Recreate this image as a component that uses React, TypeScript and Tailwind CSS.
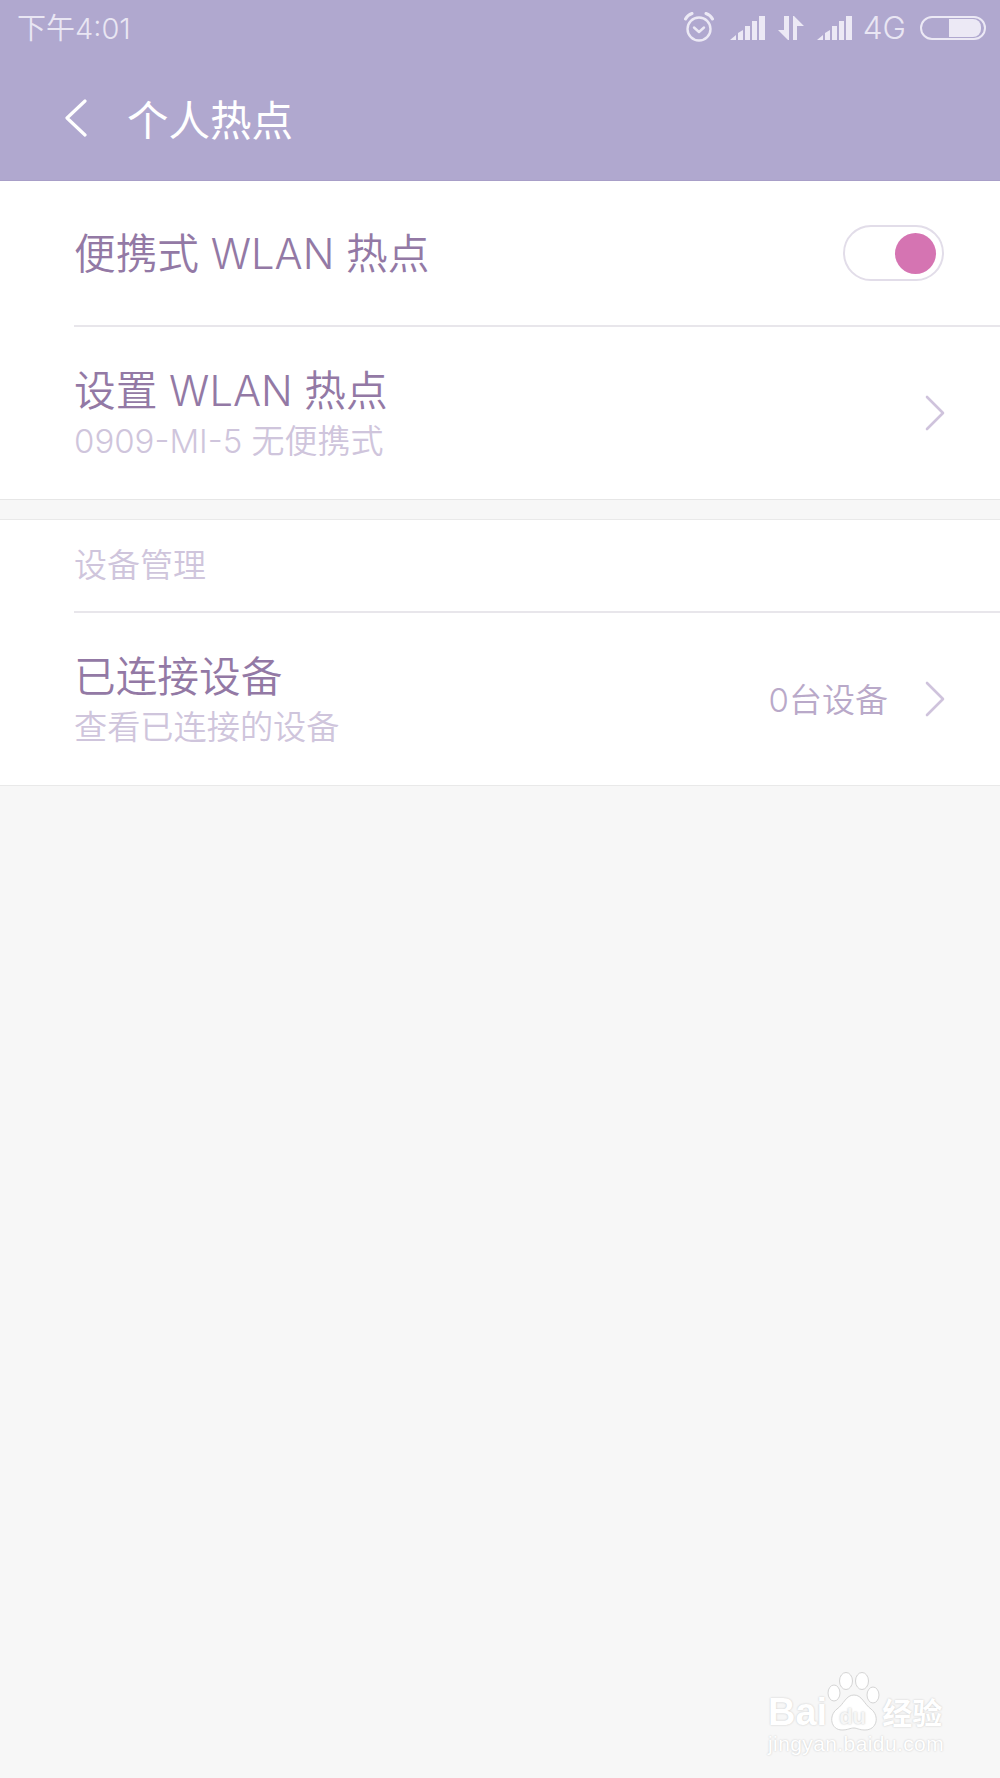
const font = "font-['Inter','Noto_Sans_CJK_SC',sans-serif]";

function SignalBars() {
  return (
    <svg width="36" height="24" viewBox="0 0 36 24" fill="#ece9f5">
      <path d="M0 24 L6 19 V24 Z" />
      <path d="M8 17 L13 14 V24 H8 Z" />
      <rect x="15" y="10" width="5" height="14" />
      <rect x="22" y="5" width="5" height="19" />
      <rect x="29" y="0" width="6" height="24" />
    </svg>
  );
}

function Chevron() {
  return (
    <svg width="20" height="36" viewBox="0 0 20 36" fill="none" stroke="#cfc3dc" strokeWidth="2.6" strokeLinecap="round" strokeLinejoin="round">
      <path d="M2 2 L18 18 L2 34" />
    </svg>
  );
}

function StatusBar() {
  return (
    <div className="flex h-[56px] items-center justify-between pl-[17px] pr-[14px]">
      <span className="font-[350] text-[29px] leading-none text-[#e9e6f3]">下午4:01</span>
      <div className="flex items-center">
        <svg width="30" height="30" viewBox="0 0 30 30" fill="none" stroke="#ece9f5" strokeWidth="2.4" className="mr-[16px] mt-[-3px]">
          <circle cx="15" cy="17" r="11.5" />
          <path d="M10 15.5 L15 20 L20 15.5" strokeLinecap="round" strokeLinejoin="round" />
          <path d="M1.5 7 C3 4 5 2.5 8 1.5" strokeWidth="3" strokeLinecap="round" />
          <path d="M28.5 7 C27 4 25 2.5 22 1.5" strokeWidth="3" strokeLinecap="round" />
        </svg>
        <SignalBars />
        <svg width="26" height="24" viewBox="0 0 26 24" fill="#ece9f5" className="ml-[12px] mr-[13px]">
          <path d="M6 0 H11 V24 H10 L0 14 H6 Z" />
          <path d="M15 24 H19 V10 H26 L16 0 H15 Z" />
        </svg>
        <SignalBars />
        <span className="ml-[10px] font-[350] text-[31.5px] leading-none text-[#e9e6f3]">4G</span>
        <div className="ml-[14px] flex h-[24px] w-[66px] items-center justify-end rounded-full border-2 border-[#ece9f5] pr-[3px]">
          <div className="h-[18px] w-[32px] rounded-r-[8px] bg-[#ece9f5]" />
        </div>
      </div>
    </div>
  );
}

function Watermark() {
  return (
    <div className="absolute left-[768px] top-[1670px] w-[200px] text-white [text-shadow:0_0_2px_#c4c4c4]">
      <div className="flex h-[62px] items-end">
        <span className="font-['Liberation_Sans',sans-serif] text-[38px] font-bold leading-[40px]">Bai</span>
        <div className="relative h-[62px] w-[54px]">
          <svg width="54" height="62" viewBox="0 0 54 62" fill="#fff" stroke="#d4d4d4" strokeWidth="1" className="absolute left-0 top-0">
            <ellipse cx="7" cy="23" rx="6" ry="8" />
            <ellipse cx="19" cy="11" rx="6.5" ry="8.5" />
            <ellipse cx="35" cy="11" rx="6.5" ry="8.5" />
            <ellipse cx="46" cy="25" rx="6" ry="8" />
            <path d="M27 25 C35 25 37 34 44 39 C53 46 50 60 38 60 C32 60 30 58 27 58 C23 58 21 60 15 60 C4 60 1 46 10 39 C17 34 19 25 27 25 Z" />
          </svg>
          <span className="absolute bottom-[4px] left-[12px] font-['Liberation_Sans',sans-serif] text-[22px] font-bold leading-none text-[#f6f6f6]">du</span>
        </div>
        <span className="ml-[1px] text-[30px] font-bold leading-[38px]">经验</span>
      </div>
      <div className="whitespace-nowrap font-['Liberation_Sans',sans-serif] text-[21px] leading-[24px] tracking-[0.4px]">jingyan.baidu.com</div>
    </div>
  );
}

export default function App() {
  return (
    <div className={`${font} relative h-[1778px] w-[1000px] overflow-hidden bg-[#f7f7f7]`}>
      <header className="h-[181px] border-b border-[#a89fc8] bg-[#b0a8cf]">
        <StatusBar />
        <div className="flex h-[124px] items-center pl-[65px]">
          <svg width="22" height="38" viewBox="0 0 22 38" fill="none" stroke="#fff" strokeWidth="3.2" strokeLinecap="round" strokeLinejoin="round">
            <path d="M20 2 L2 19 L20 36" />
          </svg>
          <h1 className="ml-[40px] mt-[7px] text-[41.5px] font-normal leading-none text-white">个人热点</h1>
        </div>
      </header>

      <section className="border-b border-[#e6e6e6] bg-white">
        <div className="flex h-[144px] items-center justify-between pr-[56px] pl-[74px]">
          <span className="mt-[3px] text-[41.7px] font-[350] leading-none text-[#9379a5]">便携式 WLAN 热点</span>
          <div className="flex h-[56px] w-[101px] items-center justify-end rounded-full border-2 border-[#e2dde9] pr-[6px]">
            <div className="h-[41px] w-[41px] rounded-full bg-[#d574b2]" />
          </div>
        </div>
        <div className="ml-[74px] h-[2px] bg-[#e8e6eb]" />
        <div className="flex h-[172px] items-center justify-between pr-[55px] pl-[74px]">
          <div>
            <div className="text-[41.7px] font-[350] leading-[52px] text-[#9379a5]">设置 WLAN 热点</div>
            <div className="mt-[4px] text-[33px] font-[350] leading-[40px] text-[#cfc5dc]">0909-MI-5 无便携式</div>
          </div>
          <Chevron />
        </div>
      </section>

      <section className="mt-[19px] border-y border-[#e9e9e9] bg-white">
        <div className="flex h-[91px] items-center pl-[74px] text-[33px] font-[350] leading-none text-[#cfc5dc]">设备管理</div>
        <div className="ml-[74px] h-[2px] bg-[#e8e6eb]" />
        <div className="flex h-[172px] items-center pr-[55px] pl-[74px]">
          <div>
            <div className="text-[41.7px] font-[350] leading-[52px] text-[#9379a5]">已连接设备</div>
            <div className="mt-[4px] text-[33.2px] font-[350] leading-[40px] text-[#cfc5dc]">查看已连接的设备</div>
          </div>
          <span className="ml-auto mr-[37px] mt-[3px] text-[33px] font-[350] leading-none text-[#b9a9c9]">0台设备</span>
          <Chevron />
        </div>
      </section>

      <Watermark />
    </div>
  );
}
